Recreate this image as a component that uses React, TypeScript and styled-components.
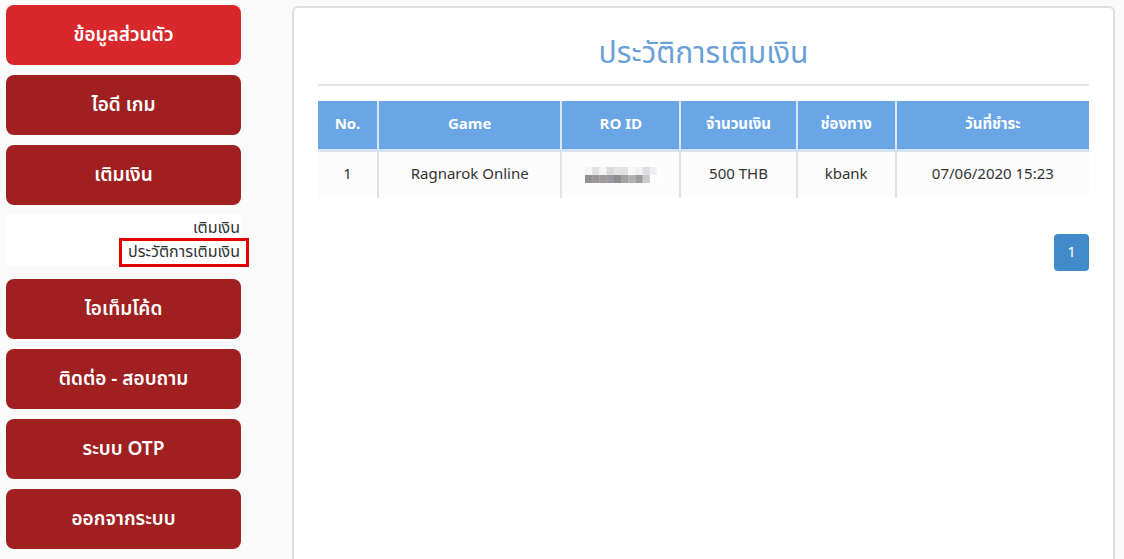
import React from 'react';
import styled, { createGlobalStyle } from 'styled-components';

const GlobalStyle = createGlobalStyle`
  html, body {
    margin: 0;
    padding: 0;
    background: #fafafa;
    font-family: "Noto Sans Thai", "Noto Sans", "Liberation Sans", sans-serif;
    color: #333;
  }
  * { box-sizing: border-box; }
`;

const Page = styled.div`
  display: flex;
  align-items: flex-start;
  padding: 5px 9px 0 6px;
  gap: 51px;
  min-height: 559px;
`;

const Sidebar = styled.nav`
  width: 235px;
  flex: 0 0 235px;
  display: flex;
  flex-direction: column;
  gap: 10px;
`;

const MenuButton = styled.a<{ $active?: boolean }>`
  display: flex;
  align-items: center;
  justify-content: center;
  height: 60px;
  border-radius: 8px;
  background: ${({ $active }) => ($active ? '#d8282b' : '#a02021')};
  color: #fff;
  font-size: 19px;
  font-weight: 600;
  text-decoration: none;
  cursor: pointer;
`;

const SubMenu = styled.div`
  background: #fff;
  display: flex;
  flex-direction: column;
  align-items: flex-end;
  padding-top: 3px;
  height: 50px;
  margin-bottom: 4px;
`;

const SubItem = styled.a<{ $current?: boolean }>`
  font-size: 16px;
  line-height: ${({ $current }) => ($current ? '23px' : '20px')};
  color: #333;
  text-decoration: none;
  padding: 0 6px;
  margin-right: ${({ $current }) => ($current ? '-8px' : '-5px')};
  border: 3px solid ${({ $current }) => ($current ? '#e50000' : 'transparent')};
  border-width: ${({ $current }) => ($current ? '3px' : '0 0 0 3px')};
`;

const Panel = styled.section`
  flex: 1;
  background: #fff;
  border: 2px solid #dedede;
  border-bottom: none;
  border-radius: 6px 6px 0 0;
  padding: 23px 24px 0 24px;
  margin-top: 1px;
  min-height: 553px;
`;

const Title = styled.h1`
  margin: 0;
  text-align: center;
  font-size: 30px;
  font-weight: 400;
  color: #6a9fd8;
  line-height: 46px;
  padding-bottom: 7px;
  border-bottom: 2px solid #e6e6e6;
`;

const Table = styled.table`
  width: 100%;
  margin-top: 15px;
  border-collapse: collapse;
  font-size: 15px;
`;

const Th = styled.th<{ $w: number }>`
  width: ${({ $w }) => $w}px;
  height: 49px;
  background: #6aa6e6;
  color: #fff;
  font-weight: 700;
  text-align: center;
  border-left: 2px solid #d8e6f5;
  border-bottom: 3px solid #d4e4f6;
  &:first-child { border-left: none; }
`;

const Td = styled.td`
  height: 48px;
  background: #fcfcfc;
  text-align: center;
  color: #333;
  border-left: 2px solid #e2e2e2;
  &:first-child { border-left: none; }
`;

const Pager = styled.div`
  display: flex;
  justify-content: flex-end;
  margin-top: 36px;
`;

const PageButton = styled.span`
  display: flex;
  align-items: center;
  justify-content: center;
  width: 35px;
  height: 37px;
  border-radius: 4px;
  background: #428bca;
  color: #fff;
  font-size: 15px;
`;

const blur = [
  ['#f6f6f6', '#e2e2e2', '#f4f4f4', '#dcd9d9', '#e4e4e6', '#e2e2e2', '#f8f8f8', '#f2f0f0', '#dedde0', '#f0f1f3'],
  ['#939190', '#989696', '#9c9b9b', '#9a9aa4', '#8f8e8d', '#a3a2a2', '#b0b1b2', '#9e9c99', '#c9cbcb', '#ffffff'],
];

const Pixelated: React.FC = () => (
  <svg width="72" height="24" viewBox="0 0 72 24" style={{ display: 'inline-block', verticalAlign: 'middle' }}>
    {blur.map((row, r) =>
      row.map((c, i) => <rect key={`${r}-${i}`} x={i * 7.2} y={r * 8 + 4} width={7.4} height={8} fill={c} />)
    )}
  </svg>
);

const columns = [
  { label: 'No.', w: 60 },
  { label: 'Game', w: 183 },
  { label: 'RO ID', w: 119 },
  { label: 'จำนวนเงิน', w: 116 },
  { label: 'ช่องทาง', w: 99 },
  { label: 'วันที่ชำระ', w: 193 },
];

const App: React.FC = () => (
  <>
    <GlobalStyle />
    <Page>
      <Sidebar>
        <MenuButton $active>ข้อมูลส่วนตัว</MenuButton>
        <MenuButton>ไอดี เกม</MenuButton>
        <MenuButton>เติมเงิน</MenuButton>
        <SubMenu>
          <SubItem>เติมเงิน</SubItem>
          <SubItem $current>ประวัติการเติมเงิน</SubItem>
        </SubMenu>
        <MenuButton>ไอเท็มโค้ด</MenuButton>
        <MenuButton>ติดต่อ - สอบถาม</MenuButton>
        <MenuButton>ระบบ OTP</MenuButton>
        <MenuButton>ออกจากระบบ</MenuButton>
      </Sidebar>
      <Panel>
        <Title>ประวัติการเติมเงิน</Title>
        <Table>
          <thead>
            <tr>
              {columns.map((c) => (
                <Th key={c.label} $w={c.w}>{c.label}</Th>
              ))}
            </tr>
          </thead>
          <tbody>
            <tr>
              <Td>1</Td>
              <Td>Ragnarok Online</Td>
              <Td><Pixelated /></Td>
              <Td>500 THB</Td>
              <Td>kbank</Td>
              <Td>07/06/2020 15:23</Td>
            </tr>
          </tbody>
        </Table>
        <Pager>
          <PageButton>1</PageButton>
        </Pager>
      </Panel>
    </Page>
  </>
);

export default App;
